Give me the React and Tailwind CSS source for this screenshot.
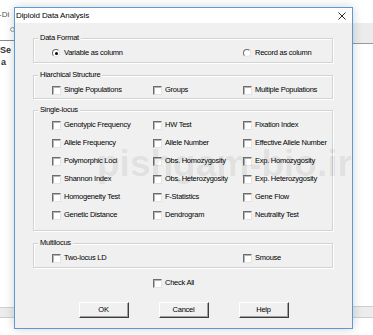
import React from "react";

function Check({ label }) {
  return (
    <div className="flex items-center h-[18px]">
      <span className="w-[9px] h-[9px] bg-white border border-t-[#6d6d6d] border-l-[#6d6d6d] border-r-[#e3e3e3] border-b-[#e3e3e3] shadow-[inset_1px_1px_0_#b5b5b5] shrink-0" />
      <span className="ml-[3px] whitespace-nowrap">{label}</span>
    </div>
  );
}

function Radio({ label, checked }) {
  return (
    <div className="flex items-center h-[18px]">
      <span className="relative w-[8px] h-[8px] rounded-full bg-white border border-t-[#6d6d6d] border-l-[#6d6d6d] border-r-[#e3e3e3] border-b-[#e3e3e3] shrink-0 flex items-center justify-center">
        {checked && <span className="w-[3px] h-[3px] rounded-full bg-black" />}
      </span>
      <span className="ml-[4px] whitespace-nowrap">{label}</span>
    </div>
  );
}

function Group({ title, h, className = "", children }) {
  return (
    <div
      className={
        "relative w-[300px] border border-[#d3d3d3] shadow-[inset_1px_1px_0_#fff,1px_1px_0_#fff] pt-[5px] pl-[18px] " +
        h +
        " " +
        className
      }
    >
      <span className="absolute left-[4px] top-[-6px] px-[2px] bg-[#f0f0f0] leading-[10px]">{title}</span>
      <div className="grid grid-cols-[101px_90px_1fr]">{children}</div>
    </div>
  );
}

function Btn({ children }) {
  return (
    <div className="w-[50px] h-[16px] bg-[#f0f0f0] border border-t-white border-l-white border-r-[#3c3c3c] border-b-[#3c3c3c] shadow-[inset_-1px_-1px_0_#a0a0a0] flex items-center justify-center">
      {children}
    </div>
  );
}

export default function App() {
  return (
    <div className="relative w-[373px] h-[335px] bg-white overflow-hidden font-['Liberation_Sans',Arial,sans-serif] text-black">
      {/* background window bits */}
      <div className="absolute left-[-1px] top-[10px] text-[8px] text-[#555] leading-[10px]">-Di</div>
      <div className="absolute left-[10px] top-[27px] w-[5px] h-[5px] rounded-full border border-[#999]" />
      <div className="absolute left-0 top-[40px] w-[14px] h-[1px] bg-[#8a8a8a]" />
      <div className="absolute left-0 top-[45px] text-[9px] font-bold text-[#333] leading-[10px]">Se</div>
      <div className="absolute left-[1px] top-[57px] text-[9px] font-bold text-[#333] leading-[10px]">a</div>
      <div className="absolute left-[353px] top-[23px] w-[20px] h-[20px] bg-[#ececec]" />
      <div className="absolute left-[353px] top-[43px] w-[20px] h-[1px] bg-[#9a9a9a]" />
      <div className="absolute left-0 top-[307px] w-[14px] h-[11px] bg-[#ececec] border-t border-b border-[#cfcfcf]" />
      <div className="absolute left-[353px] top-[306px] w-[20px] h-[12px] bg-[#ececec] border-t border-b border-[#cfcfcf]" />

      {/* dialog */}
      <div className="absolute left-[14px] top-[7px] w-[339px] h-[322px] border border-[#5b9bd5] shadow-[0_0_10px_rgba(0,0,0,0.18)] flex flex-col bg-[#f0f0f0]">
        <div className="h-[15px] bg-white flex items-center justify-between pl-[1px] pr-[6px] shrink-0">
          <span className="text-[8px] tracking-[-0.1px] leading-[10px]">Diploid Data Analysis</span>
          <svg width="8" height="8" viewBox="0 0 8 8">
            <path d="M0.5 0.5 L7.5 7.5 M7.5 0.5 L0.5 7.5" stroke="#2b2b2b" strokeWidth="1" />
          </svg>
        </div>
        <div className="flex-1 flex flex-col pt-[15px] pl-[18px] text-[7.5px] tracking-[-0.25px] leading-[10px]">
          <Group title="Data Format" h="h-[25px]">
            <Radio label="Variable as column" checked />
            <div />
            <Radio label="Record as column" />
          </Group>
          <Group title="Hiarchical Structure" h="h-[24px]" className="mt-[12px]">
            <Check label="Single Populations" />
            <Check label="Groups" />
            <Check label="Multiple Populations" />
          </Group>
          <Group title="Single-locus" h="h-[121px]" className="mt-[11px]">
            <Check label="Genotypic Frequency" />
            <Check label="HW Test" />
            <Check label="Fixation Index" />
            <Check label="Allele Frequency" />
            <Check label="Allele Number" />
            <Check label="Effective Allele Number" />
            <Check label="Polymorphic Loci" />
            <Check label="Obs. Homozygosity" />
            <Check label="Exp. Homozygosity" />
            <Check label="Shannon Index" />
            <Check label="Obs. Heterozygosity" />
            <Check label="Exp. Heterozygosity" />
            <Check label="Homogeneity Test" />
            <Check label="F-Statistics" />
            <Check label="Gene Flow" />
            <Check label="Genetic Distance" />
            <Check label="Dendrogram" />
            <Check label="Neutrality Test" />
          </Group>
          <Group title="Multilocus" h="h-[25px]" className="mt-[12px]">
            <Check label="Two-locus LD" />
            <div />
            <Check label="Smouse" />
          </Group>
          <div className="mt-[6px] pl-[120px]">
            <Check label="Check All" />
          </div>
          <div className="mt-[10px] ml-[-18px] flex justify-center gap-[30px]">
            <Btn>OK</Btn>
            <Btn>Cancel</Btn>
            <Btn>Help</Btn>
          </div>
        </div>
      </div>

      {/* watermark */}
      <div className="absolute left-[97px] top-[145px] text-[37px] leading-[38px] font-bold text-black/[0.08] whitespace-nowrap pointer-events-none">
        pishgam-bio.ir
      </div>
    </div>
  );
}
